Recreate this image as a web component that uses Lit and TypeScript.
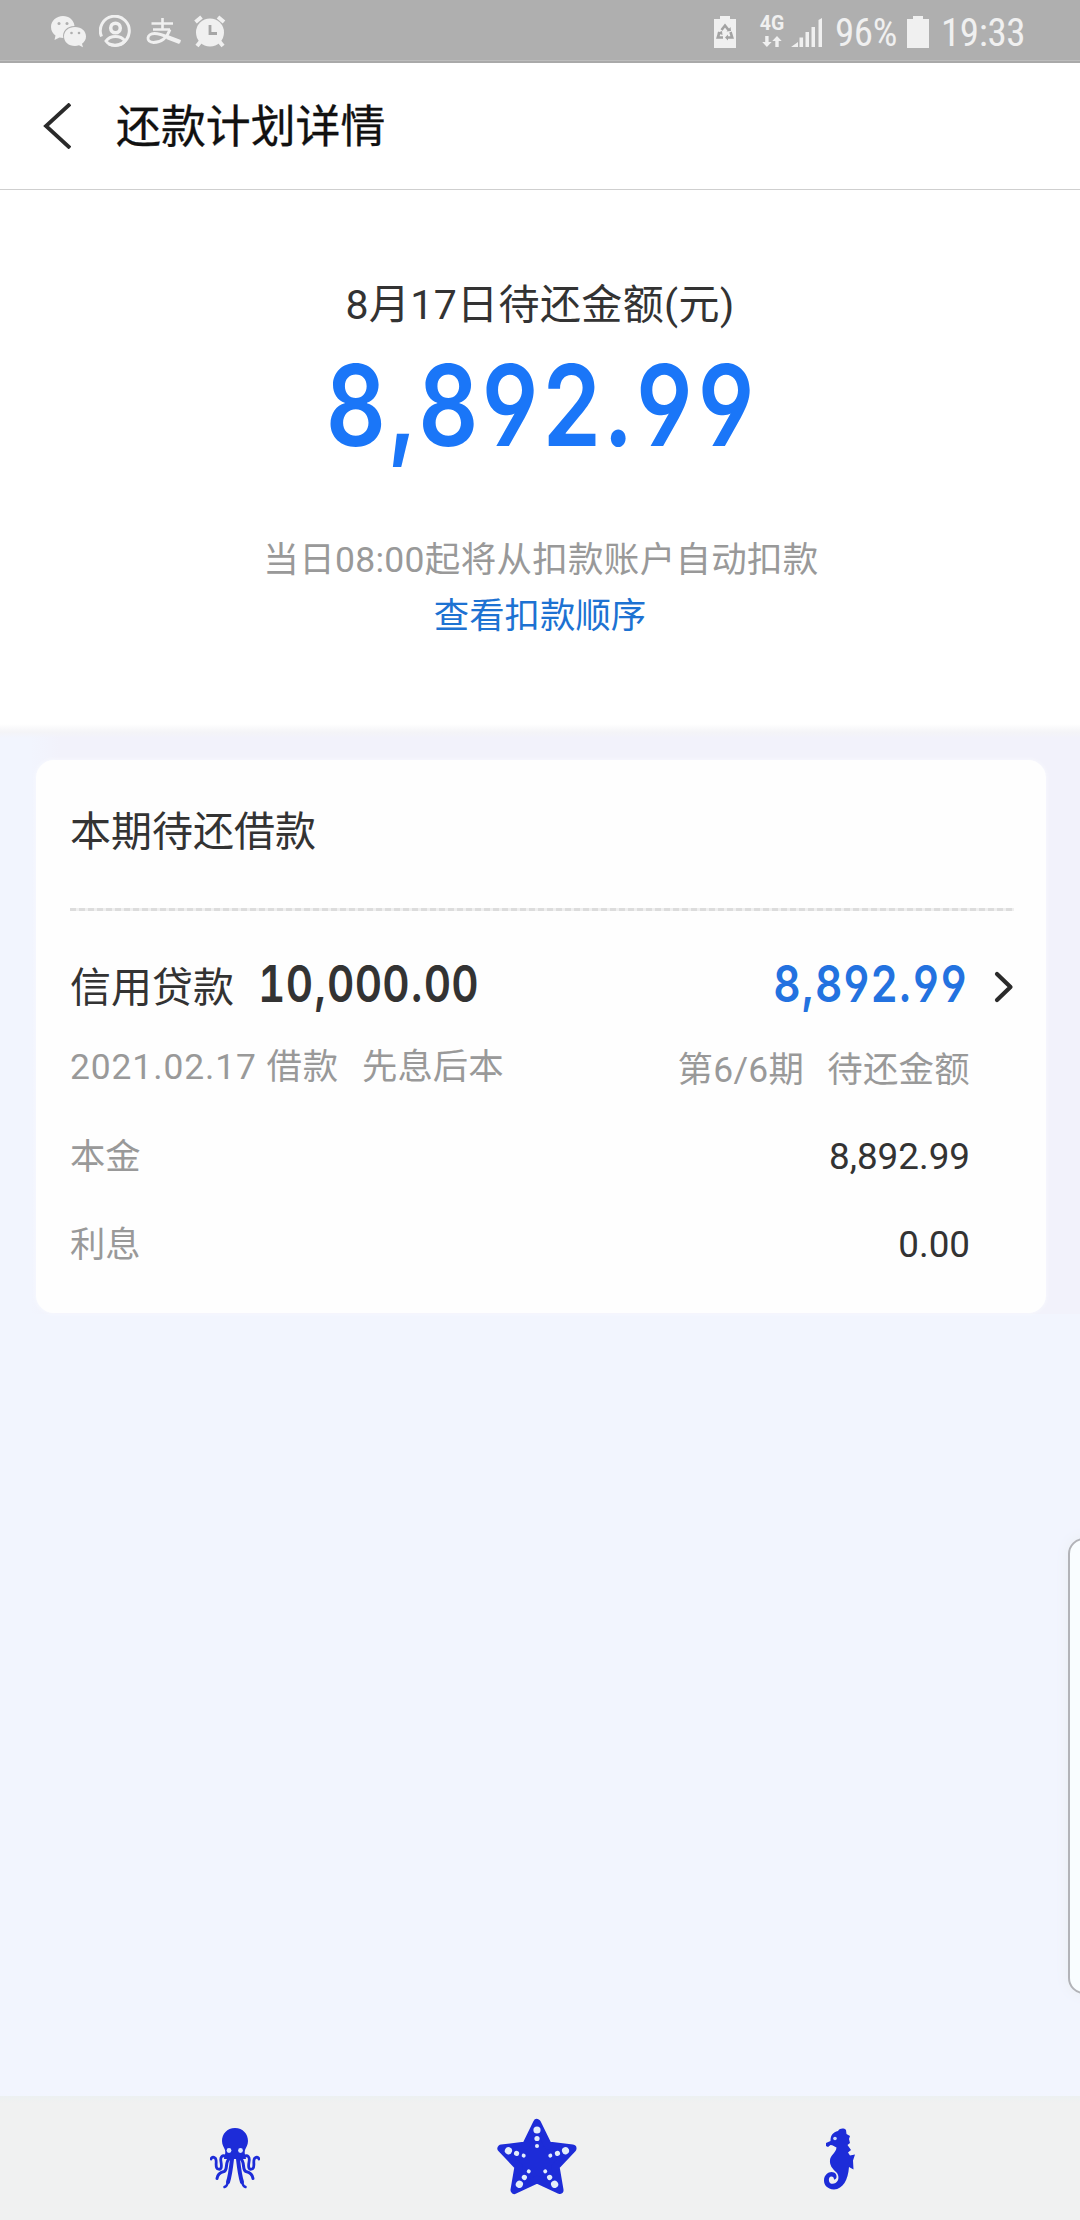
import { LitElement, html, css, svg } from "lit";
import { customElement, property } from "lit/decorators.js";

/** Money figure set on a fixed grid: digits take a full cell, separators half a cell. */
@customElement("amount-figure")
class AmountFigure extends LitElement {
  @property() value = "";
  @property({ type: Number }) size = 40;
  @property({ type: Number }) pitch = 28;
  @property({ type: Number }) squeeze = 0.83;

  static styles = css`
    :host { display: block; color: inherit; }
    svg { display: block; overflow: visible; }
    text {
      font-family: Inter, Roboto, sans-serif;
      font-weight: 600;
      font-feature-settings: "cv03", "cv04", "tnum";
      text-anchor: middle;
      fill: currentColor;
    }
  `;

  render() {
    let at = 0;
    const xs = [...this.value].map((ch) => {
      const cell = /\d/.test(ch) ? this.pitch : this.pitch / 2;
      const x = at + cell / 2;
      at += cell;
      return (x / this.squeeze).toFixed(2);
    });
    const cap = Math.round(this.size * 0.727);
    return html`<svg width=${at} height=${cap} viewBox="0 0 ${at} ${cap}">
      <text transform="scale(${this.squeeze} 1)" x=${xs.join(" ")} y=${cap} font-size=${this.size}>${this.value}</text>
    </svg>`;
  }
}

@customElement("status-bar")
class StatusBar extends LitElement {
  static styles = css`
    :host {
      display: flex; align-items: flex-start; height: 63px; box-sizing: border-box;
      padding: 15px 57px 0 50px; background: linear-gradient(#afafaf 60px, #bdbdbd 60px, #bdbdbd 61px, #a9a9a9 61px);
      color: #f0f0f0; font-family: "Roboto Condensed", Roboto, sans-serif;
    }
    svg { display: block; flex: none; }
    .left { display: flex; gap: 12px; }
    .right { display: flex; margin-left: auto; }
    .eco { margin-right: 22px; }
    .net { display: flex; flex-direction: column; align-items: center; width: 28px; margin-right: 5px; }
    .g { font: 700 19.500px/18px Roboto, sans-serif; height: 20px; }
    .num { font-size: 39px; line-height: 37px; height: 33px; white-space: nowrap; }
    .pct { width: 62px; margin: 0 10px 0 12px; letter-spacing: -0.4px; }
    .time { width: 82px; margin-left: 12px; letter-spacing: -0.4px; }
  `;

  render() {
    return html`
      <div class="left">
        <svg width="37" height="33" viewBox="0 0 37 33">
          <path fill="#f0f0f0" d="M13 1C6 1 1 6 1 12c0 4 2 6.500 4.500 8.500L4.500 25l5-2.500c1 .3 2.500.5 3.800.5C12 16 17 11 24.500 11 24 5 19 1 13 1Z"/>
          <path fill="#f0f0f0" d="M25 12c-6.500 0-11 4-11 9.500S18.500 31 25 31c1.300 0 2.700-.2 4-.7l4 2-1-3.600c2.500-1.800 4-4.200 4-7.200C36 16 31.500 12 25 12Z"/>
          <g fill="#afafaf"><circle cx="9" cy="8.500" r="1.500"/><circle cx="17" cy="8.500" r="1.500"/><circle cx="21.500" cy="18" r="1.300"/><circle cx="29" cy="18" r="1.300"/></g>
        </svg>
        <svg width="34" height="33" viewBox="0 0 34 33">
          <g fill="none" stroke="#f0f0f0" stroke-width="3">
            <path d="M2.500 21.500A14.500 14.500 0 1 1 10 29"/><circle cx="16.500" cy="13" r="4.800" stroke-width="3.500"/>
            <path d="M7 26c4-6 15-6 19 0-4 6-15 6-19 0Z"/>
          </g>
        </svg>
        <svg width="37" height="33" viewBox="0 0 37 33" fill="none" stroke="#f0f0f0">
          <path stroke-width="2.600" d="M6.500 8.500h21.500M17.500 3v11M8 14.500h17"/>
          <path stroke-width="2.800" d="M25 14.500c-3 8-9 13-16.500 13-8 0-7-9 1-9 9 0 16 6 26 8"/>
          <path stroke-width="4.500" d="M22 22l13 5"/>
        </svg>
        <svg width="32" height="33" viewBox="0 0 32 33">
          <g stroke="#f0f0f0" stroke-width="4" fill="none"><path d="M1.500 7l6-5M30 7l-6-5M7 26l-4 5M25 26l4 5"/></g>
          <circle cx="16" cy="17.500" r="14" fill="#f0f0f0"/>
          <path d="M16 10v8.500h7" fill="none" stroke="#a6a6a6" stroke-width="2.800"/>
        </svg>
      </div>
      <div class="right">
        <svg class="eco" width="22" height="33" viewBox="0 0 22 33">
          <path fill="#f0f0f0" d="M0 4h6V1h10v3h6v29H0z"/>
          <g fill="none" stroke="#a3a3a3" stroke-width="2.600">
            <path d="M7.500 15l3.500-4.500L14.500 15"/><path d="M5.500 17L3.800 22.500H9"/><path d="M16.500 17l1.700 5.500H13"/>
          </g>
          <path fill="#a3a3a3" d="M12.500 16.500l4.500-.5-.5-4zM14 19.500v6l-3-3zM3 18l5-2 .5 4z"/>
        </svg>
        <div class="net">
          <div class="g">4G</div>
          <svg width="20" height="13" viewBox="0 0 20 13" fill="#f0f0f0">
            <path d="M3.200 1h3.400v6h3L4.900 12 .2 7h3zM13.300 12h3.400V6h3L15 1l-4.700 5h3z"/>
          </svg>
        </div>
        <svg width="32" height="33" viewBox="0 0 32 33" fill="#f0f0f0">
          <path d="M0 32l7-5v5zM8.500 22.500h3.600V32H8.500zM14.500 17h3.500v15h-3.500zM20.500 12H24v20h-3.500zM27.500 5l3.500-2v29h-3.500z"/>
        </svg>
        <div class="num pct">96%</div>
        <svg width="22" height="33" viewBox="0 0 22 33"><path fill="#f0f0f0" d="M0 4h6V1h10v3h6v29H0z"/></svg>
        <div class="num time">19:33</div>
      </div>
    `;
  }
}

@customElement("tab-bar")
class TabBar extends LitElement {
  static styles = css`
    :host {
      display: flex; align-items: flex-start;
      height: 124px; box-sizing: border-box; padding: 21px 0 0 210px;
      background: linear-gradient(#ecf0f1, #f0f1f1 8px); color: #1d2cd8;
    }
    svg { display: block; }
    .side { margin-top: 11px; }
    .star { margin: 0 247px 0 237px; }
  `;

  private arm(turn: number) {
    return svg`<g transform="rotate(${turn} 40 43)" fill="#e3edfb">
      <circle cx="40" cy="13" r="3.600"/><circle cx="40" cy="21.500" r="2.600"/><circle cx="40" cy="29" r="2"/></g>`;
  }

  render() {
    return html`
      <svg class="side" width="50" height="62" viewBox="0 0 50 62">
        <path fill="currentColor" d="M25 0C17 0 12 6 12 13c0 4 2 6 3 9 1 4-1 7-1 9h22c0-2-2-5-1-9 1-3 3-5 3-9C38 6 33 0 25 0Z"/>
        <g fill="none" stroke="currentColor" stroke-linecap="round">
          <path stroke-width="2.800" d="M17 29c-5-3-7 0-6 5 1 6 0 8-3 7-4-1 0-9-3-11-2-1.500-3.500-.5-4 1M33 29c5-3 7 0 6 5-1 6 0 8 3 7 4-1 0-9 3-11 2-1.500 3.500-.5 4 1"/>
          <path stroke-width="3" d="M19 31c-4 3-1 11-5 12.500-4 1-6.500 3-7 7M31 31c4 3 1 11 5 12.500 4 1 6.500 3 7 7"/>
          <path stroke-width="4" d="M22 31c-1 9-2 17-4 23M28 31c1 9 2 17 4 23"/>
          <path stroke-width="2.500" d="M18 54c-.7 3-2 4.500-3.500 5M32 54c.7 3 2 4.500 3.500 5"/>
        </g>
        <circle cx="19" cy="22.500" r="2.400" fill="#dce8ff"/><circle cx="30.500" cy="22.500" r="2.400" fill="#dce8ff"/>
      </svg>
      <svg class="star" width="80" height="78" viewBox="0 0 80 78">
        <path fill="currentColor" stroke="currentColor" stroke-width="8" stroke-linejoin="round"
          d="M40 6L51 28.500 75.500 31.500 58.500 49.500 62.500 73 40 62.500 17.500 73 21.500 49.500 4.500 31.500 29 28.500Z"/>
        ${[0, 72, 144, 216, 288].map((turn) => this.arm(turn))}
      </svg>
      <svg class="side" width="34" height="64" viewBox="0 0 34 64">
        <path fill="currentColor" d="M14 3C16 0 20 0 22 2l.5 4L26 8l-1 3 1 4-2.500 2 3.500 5-3 2.500 2 3 5-1-2 6 .5 9-4.500-2.500C24 52 19 61 10 61.500 3 61 0 57 0 52.500 0 47 4 44 7.500 44c4 0 5.500 3 5 5.500-.5 1.500-1.500 2-2.500 2 0-2-1-3-2.500-3-2 0-3 2-2.500 4.500.5 3 4 3.500 6.500 2 3.500-2 4-7 1-10.500C8 40.500 5.500 37 6 32c.5-5 6-7 6.500-12.500C10.500 18.500 9 17 6.500 17L4 19l-2-1v-3l4.500-2C6.500 7 9 4.500 14 3Z"/>
        <circle cx="11" cy="10.500" r="1.800" fill="#cfdcff"/>
      </svg>
    `;
  }
}

@customElement("app-root")
class AppRoot extends LitElement {
  static styles = css`
    :host {
      display: flex; flex-direction: column; position: relative; overflow: hidden;
      width: 1080px; height: 2220px; box-sizing: border-box; background: #f2f5fe;
      font-family: Roboto, "Noto Sans CJK SC", sans-serif; color: #333;
    }
    .head {
      display: flex; align-items: center; height: 127px; box-sizing: border-box;
      padding: 0 0 0 43px; background: #fff; border-bottom: 1.500px solid #cfcfcf;
    }
    .back { display: block; margin-right: 45px; }
    .title { font-size: 44.900px; line-height: 60px; color: #111; padding-top: 3px; -webkit-text-stroke: 0.3px #111; }
    .hero {
      display: flex; flex-direction: column; align-items: center; flex: none;
      height: 534px; box-sizing: border-box; padding-top: 85px; background: #fff;
    }
    .due { font-size: 41px; line-height: 60px; letter-spacing: 0.4px; }
    .big { margin-top: 29px; color: #1a76f8; padding-left: 2px; }
    .note { margin-top: 86px; font-size: 35.500px; line-height: 56px; color: #999; letter-spacing: 0.3px; padding-left: 2px; }
    .link { font-size: 35.400px; line-height: 56px; color: #1d72d2; }
    .strip { height: 36px; flex: none; background: linear-gradient(#fff, #f4f4f7 8px, rgba(242, 241, 250, 0) 14px); }
    .card {
      flex: none; margin: 0 34px 0 36px; height: 553px; box-sizing: border-box;
      padding: 42px 32px 0 34px; background: #fefefe; border-radius: 18px;
      box-shadow: 0 0 4px #fafbfe;
    }
    .body { display: flex; flex-direction: column; flex: 1; background: linear-gradient(90deg, #f2f5fe 30px, #f2f2fb 60px, #f2f2fb) 0 0 / 100% 590px no-repeat; }
    .section { font-size: 41px; line-height: 60px; }
    .dash { height: 3px; margin-top: 46px; background: repeating-linear-gradient(90deg, #dcdcdc 0 6px, #efefef 6px 9px); }
    .row { display: flex; align-items: center; justify-content: space-between; padding-right: 44px; }
    .main { height: 60px; margin-top: 47px; padding-right: 0; }
    .group { display: flex; align-items: center; }
    .name { font-size: 41px; line-height: 60px; margin-right: 24px; }
    .fig { margin-top: -9px; }
    .blue { color: #2372e0; margin-left: auto; }
    .go { display: block; margin: -3px 0 0 25px; }
    .sub { font-size: 35.400px; line-height: 50px; color: #999; height: 50px; margin-top: 24px; }
    .sub .date { letter-spacing: 0.9px; }
    .sub .term { letter-spacing: 0.3px; margin-top: 6px; }
    .gap { margin-left: 23px; }
    .item { height: 50px; line-height: 50px; margin-top: 38px; font-size: 35.300px; }
    .sub + .item { margin-top: 40px; }
    .label { color: #999; }
    .val { font-size: 36.800px; }
    .edge {
      position: absolute; left: 1068px; top: 1538px; width: 40px; height: 456px; box-sizing: border-box;
      border: 2px solid #b2b3b8; border-radius: 16px; background: #f9fdff; box-shadow: 0 0 14px #eaeef3;
    }
  `;

  private items = [
    { label: "本金", value: "8,892.99" },
    { label: "利息", value: "0.00" },
  ];

  render() {
    return html`
      <status-bar></status-bar>
      <div class="head">
        <svg class="back" width="28" height="46" viewBox="0 0 28 46" fill="none" stroke="#2a2a2a" stroke-width="3.800">
          <path d="M27 1L3 23l24 22"/>
        </svg>
        <div class="title">还款计划详情</div>
      </div>
      <div class="hero">
        <div class="due">8月17日待还金额(元)</div>
        <amount-figure class="big" value="8,892.99" size="113" pitch="61.7"></amount-figure>
        <div class="note">当日08:00起将从扣款账户自动扣款</div>
        <div class="link">查看扣款顺序</div>
      </div>
      <div class="body">
        <div class="strip"></div>
        <div class="card">
          <div class="section">本期待还借款</div>
          <div class="dash"></div>
          <div class="row main">
            <div class="name">信用贷款</div>
            <amount-figure class="fig" value="10,000.00" size="51" pitch="27.6"></amount-figure>
            <amount-figure class="fig blue" value="8,892.99" size="51" pitch="27.8"></amount-figure>
            <svg class="go" width="21" height="34" viewBox="0 0 21 34" fill="none" stroke="#2b2b2b" stroke-width="4.200" stroke-linecap="round" stroke-linejoin="round">
              <path d="M4 4l13.500 13L4 30"/>
            </svg>
          </div>
          <div class="row sub">
            <div class="group"><span class="date">2021.02.17 借款</span><span class="gap">先息后本</span></div>
            <div class="group term"><span>第6/6期</span><span class="gap">待还金额</span></div>
          </div>
          ${this.items.map((it) => html`<div class="row item"><span class="label">${it.label}</span><span class="val">${it.value}</span></div>`)}
        </div>
      </div>
      <tab-bar></tab-bar>
      <div class="edge"></div>
    `;
  }
}
